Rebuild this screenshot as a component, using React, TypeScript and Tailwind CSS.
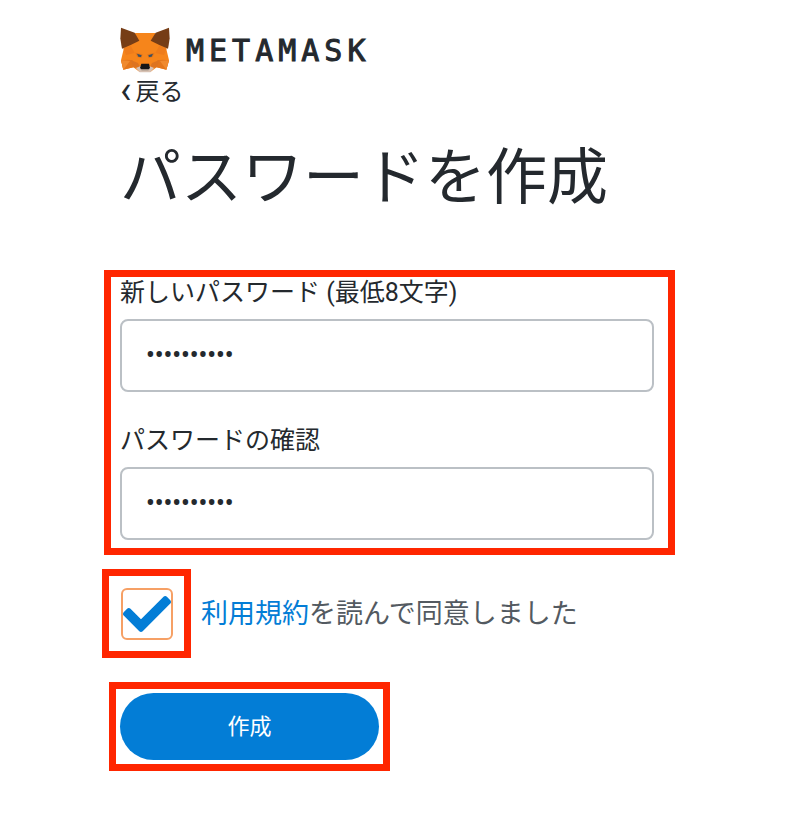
import { useState } from "react";
import { FaCheck } from "react-icons/fa";

function FoxLogo() {
  return (
    <svg viewBox="30 22 150 138" className="h-[46px] w-[50px]" aria-hidden="true">
      <polygon fill="#f6851b" points="76,40 135,40 168,84 177,122 169,150 140,143 122,156 88,156 70,143 40,150 33,122 42,84" />
      <polygon fill="#ee7c1b" points="40,86 62,78 74,100 48,106" />
      <polygon fill="#ee7c1b" points="170,86 148,78 136,100 162,106" />
      <polygon fill="#e4761b" points="33,122 52,120 68,122 70,143 40,150" />
      <polygon fill="#e4761b" points="177,122 158,120 142,122 140,143 169,150" />
      <polygon fill="#f08a2e" points="33,122 60,124 40,150" />
      <polygon fill="#f08a2e" points="177,122 150,124 169,150" />
      <polygon fill="#dd7420" points="62,121 84,130 92,146 70,143" />
      <polygon fill="#dd7420" points="148,121 126,130 118,146 140,143" />
      <polygon fill="#d7c1b3" points="78,145 92,139 118,139 132,145 121,158 89,158" />
      <polygon fill="#c0ad9e" points="90,149 120,149 114,154 96,154" />
      <polygon fill="#161616" points="94,132 117,132 120,145 116,149 94,149 90,145" />
      <polygon fill="#e2761b" points="76,99 98,104 94,116 82,112" />
      <polygon fill="#e2761b" points="134,99 112,104 116,116 128,112" />
      <polygon fill="#3b5063" points="81,102 95,107 93,112 85,111" />
      <polygon fill="#3b5063" points="129,102 115,107 117,112 125,111" />
      <polygon fill="#763d16" points="33,24 74,39 88,63 62,76 36,87 34,76 31,56" />
      <polygon fill="#763d16" points="177,24 137,39 122,63 148,76 174,87 176,76 179,56" />
    </svg>
  );
}

function PasswordField({
  id,
  label,
  value,
  onChange,
}: {
  id: string;
  label: string;
  value: string;
  onChange: (value: string) => void;
}) {
  return (
    <div>
      <label htmlFor={id} className="block text-[25px] leading-8">
        {label}
      </label>
      <input
        id={id}
        type="password"
        value={value}
        onChange={(e) => onChange(e.target.value)}
        className="mt-[10px] block h-[73px] w-full rounded-lg border-2 border-[#bbc0c5] bg-white px-6 text-[25px] font-medium outline-none"
      />
    </div>
  );
}

export default function App() {
  const [password, setPassword] = useState("metamask12");
  const [confirm, setConfirm] = useState("metamask12");
  const [agreed, setAgreed] = useState(true);

  return (
    <main className="min-h-screen bg-white pt-[27px] pr-[125px] pb-14 pl-[102px] font-[Roboto,'Noto_Sans_CJK_JP',sans-serif] text-[#24292e]">
      <header className="flex items-start gap-4 pl-[18px]">
        <FoxLogo />
        <span className="font-['DejaVu_Sans_Mono',monospace] text-[30px] leading-[48px] tracking-[5px] [-webkit-text-stroke:1px_#24292e]">
          METAMASK
        </span>
      </header>

      <a
        href="#back"
        className="ml-[18px] flex h-[34px] w-fit items-end gap-1 text-[24px] leading-[34px]"
      >
        <span className="text-[38px] leading-[38px]">‹</span>
        <span>戻る</span>
      </a>

      <h1 className="mt-[23px] ml-[18px] text-[61px] leading-[92px]">パスワードを作成</h1>

      <form onSubmit={(e) => e.preventDefault()} className="mt-[46px]">
        <div className="ml-0.5 flex flex-col gap-[33px] border-[7px] border-[#ff2600] pr-[14px] pb-2 pl-[9px]">
          <PasswordField
            id="new-password"
            label="新しいパスワード (最低8文字)"
            value={password}
            onChange={setPassword}
          />
          <PasswordField
            id="confirm-password"
            label="パスワードの確認"
            value={confirm}
            onChange={setConfirm}
          />
        </div>

        <div className="mt-[14px] flex items-center gap-[10px]">
          <div className="grid size-[89px] shrink-0 place-items-center border-[7px] border-[#ff2600]">
            <div className="relative size-[52px]">
              <input
                id="terms"
                type="checkbox"
                checked={agreed}
                onChange={(e) => setAgreed(e.target.checked)}
                className="block size-full appearance-none rounded-md border-2 border-[#f6a065]"
              />
              {agreed && (
                <FaCheck className="pointer-events-none absolute inset-0 m-auto size-12 text-[#037dd6]" />
              )}
            </div>
          </div>
          <label htmlFor="terms" className="text-[27px] leading-10 text-[#535a61]">
            <a href="#terms" className="text-[#037dd6]">
              利用規約
            </a>
            を読んで同意しました
          </label>
        </div>

        <div className="mt-6 ml-[7px] w-fit border-[7px] border-[#ff2600] p-1">
          <button
            type="submit"
            className="block h-[67px] w-[259px] rounded-full bg-[#037dd6] text-[22px] text-white"
          >
            作成
          </button>
        </div>
      </form>
    </main>
  );
}
